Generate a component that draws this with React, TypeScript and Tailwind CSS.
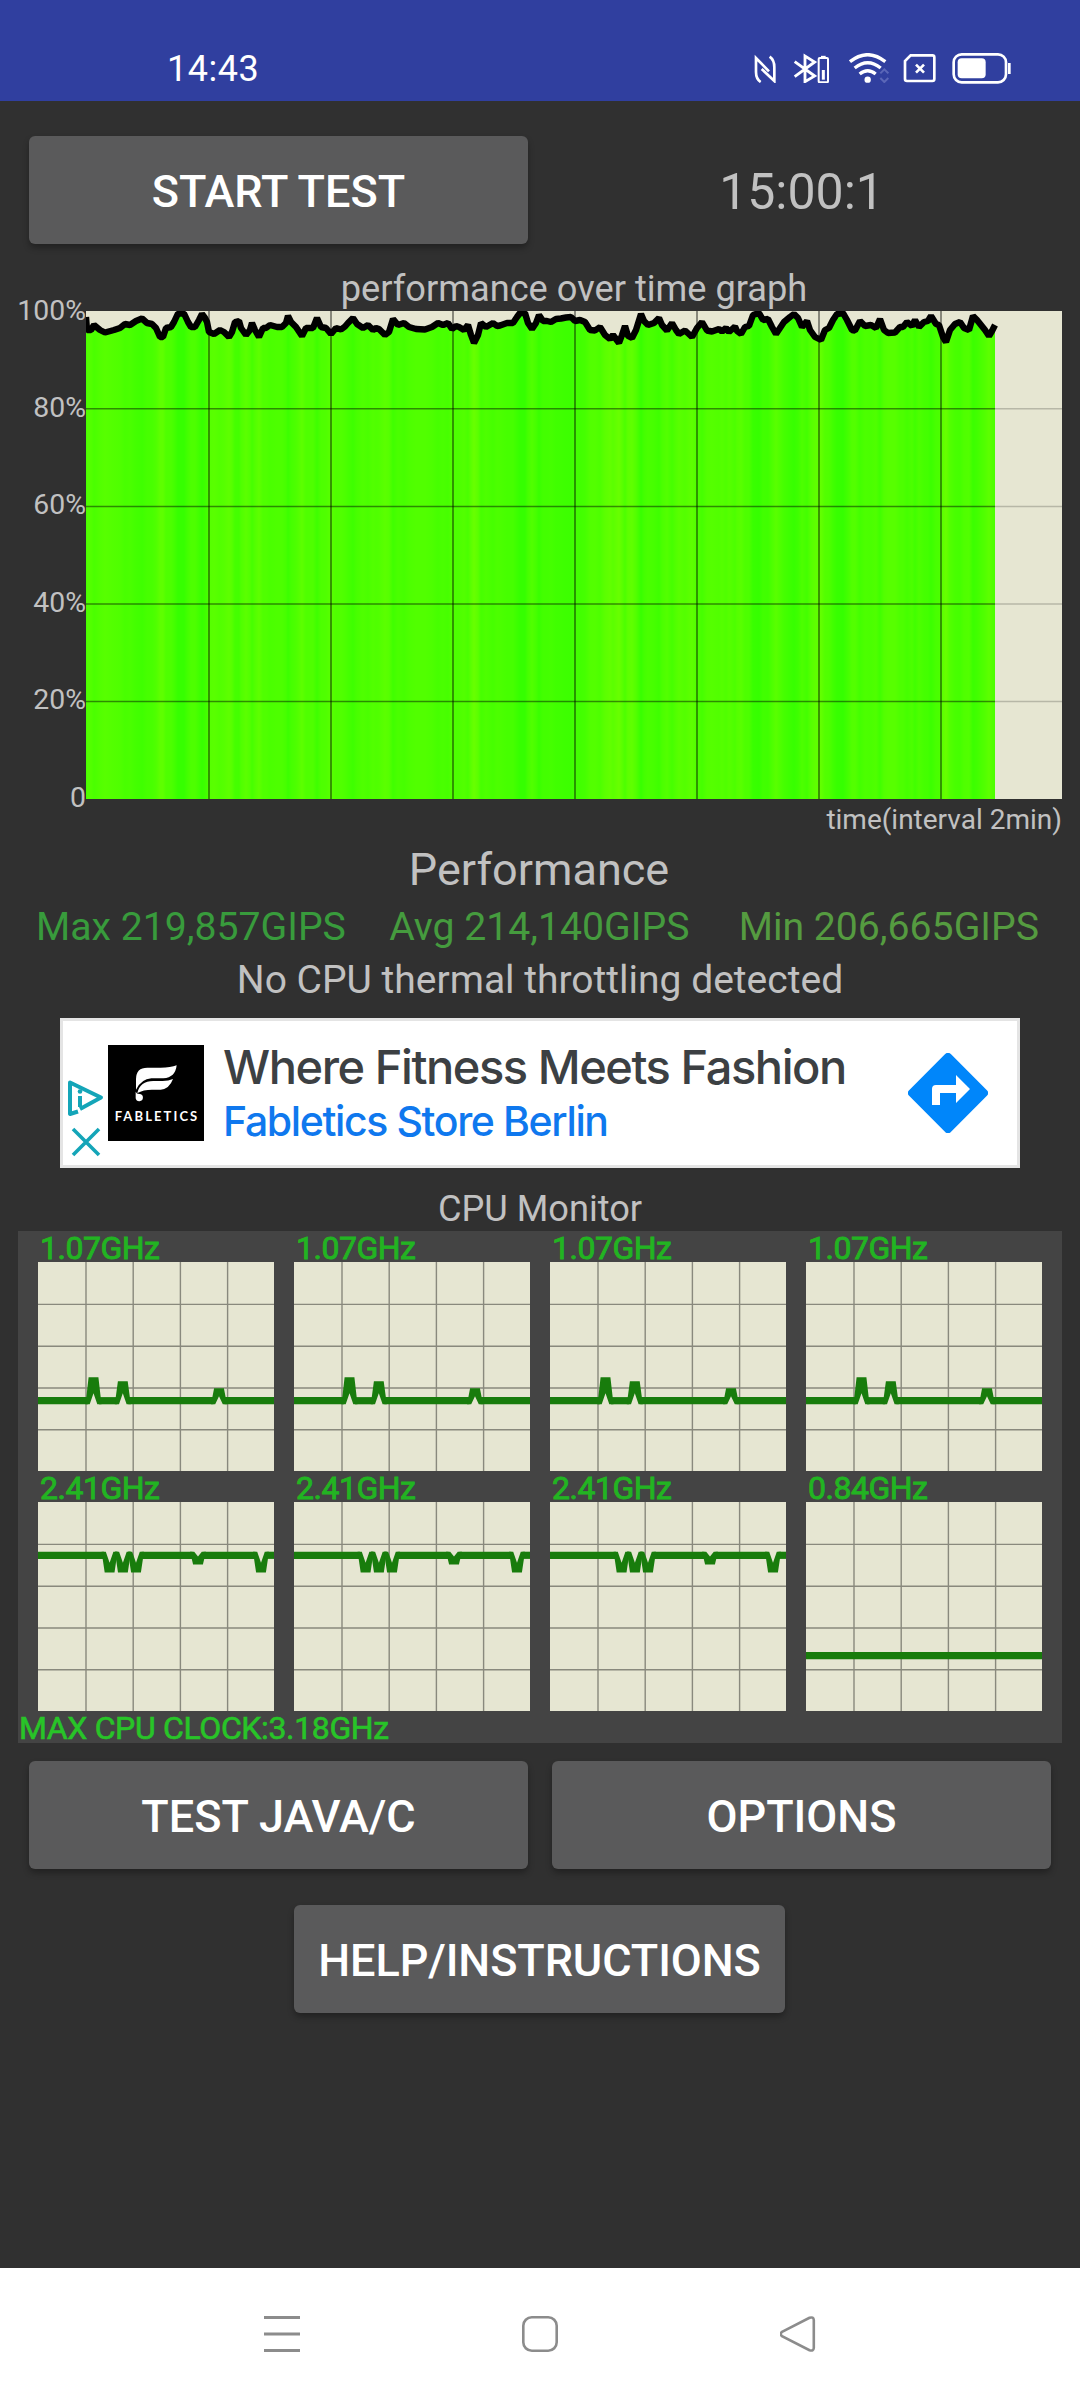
import type { ReactNode } from 'react';

// [x, y] inside the 976x488 plot area
const perfLine: [number, number][] = [
  [0, 6], [1, 19], [5, 19], [8, 14], [14, 19], [19, 21.5], [28, 19], [34, 17], [39, 13], [44, 14], [50, 10], [56, 7.5],
  [61, 12], [66, 13], [70, 17], [74, 26], [77, 26], [80, 17], [85, 16], [88, 11], [92, 2.5], [98, 2.5], [102, 11],
  [105, 16], [109, 16], [113, 9], [116, 3], [119, 7], [121, 11], [123, 21], [128, 23], [134, 19], [138, 21], [143, 26],
  [146, 21], [149, 11], [153, 10], [155, 17], [160, 24], [164, 19], [166, 12], [169, 19], [173, 26], [177, 17], [180, 17],
  [184, 14], [191, 16], [196, 16], [200, 12], [202, 5], [205, 11], [210, 16], [216, 25], [220, 17], [227, 17], [231, 7],
  [235, 16], [240, 17], [245, 23], [250, 17], [255, 18.5], [259, 15.5], [262, 12], [267, 7], [271, 13], [277, 17],
  [282, 14], [287, 19], [290, 17], [293, 18], [299, 24], [303, 21], [307, 8], [312, 14], [318, 12], [323, 16], [330, 18],
  [339, 18.5], [346, 16], [352, 12], [357, 14], [362, 12], [366, 18], [370, 15], [373, 16], [378, 19], [382, 14],
  [385, 24], [388, 32], [392, 24], [395, 12], [400, 16], [407, 12], [411, 15], [414, 14.5], [421, 12], [427, 12],
  [431, 6], [434, 2], [439, 2], [442, 12], [446, 18], [450, 12], [453, 4], [457, 10], [461, 10], [465, 11], [470, 8],
  [475, 7.5], [480, 6.5], [485, 6], [489, 10], [494, 9], [499, 11], [504, 19], [509, 19.5], [514, 16], [519, 24],
  [524, 28], [527, 24], [533, 32], [536, 24], [539, 15], [542, 25], [546, 27], [550, 19], [555, 3], [558, 10], [562, 14],
  [568, 12], [573, 7], [576, 14], [581, 19.5], [586, 12], [590, 19], [593, 23], [599, 19.5], [606, 26], [611, 17],
  [616, 11], [621, 19.5], [626, 20.5], [633, 18], [636, 20.5], [640, 17], [643, 21], [649, 15.5], [651, 20], [655, 23],
  [659, 16], [663, 15], [667, 4], [673, 2], [677, 9], [682, 8], [686, 16], [690, 23], [694, 17], [698, 11], [704, 6],
  [708, 3], [712, 7], [716, 16], [721, 10], [724, 19], [729, 26], [735, 29], [739, 19], [743, 17], [747, 9], [751, 3],
  [757, 2], [761, 9], [766, 19], [769, 19.5], [774, 10], [779, 15], [785, 14], [790, 17], [794, 8], [798, 19], [802, 22],
  [809, 21.5], [814, 16], [817, 16], [821, 11], [826, 15], [829, 9], [833, 16], [838, 11], [842, 10], [845, 5], [850, 13],
  [853, 14], [857, 26], [860, 31], [864, 19], [869, 13], [874, 11], [878, 17], [883, 19], [887, 5], [891, 9], [895, 14],
  [899, 19], [903, 25], [906, 20], [909, 14],
];

const PLOT_W = 976;
const PLOT_H = 488;
const line = perfLine.map(([x, y]) => `${x},${y}`).join(' ');
const heat = (y: number) => `rgb(${Math.round(50 + y * 1.7)},255,0)`;

// base is the steady clock level, each spike is [center x, outer edge y]
interface Trace {
  base: number;
  spikes: [number, number][];
}

const lowCluster: Trace = { base: 138.7, spikes: [[55.5, 115.2], [84.8, 119.2], [181, 126.2]] };
const midCluster: Trace = { base: 53.3, spikes: [[71.6, 70.6], [84.9, 70.6], [98, 70.6], [160, 62.6], [223, 70.6]] };
const primeCore: Trace = { base: 153.7, spikes: [] };

function tracePaths({ base, spikes }: Trace) {
  const paths: string[] = [];
  let x = 0;
  for (const [cx, tip] of spikes) {
    const side = tip < base ? -1 : 1;
    const near = base - side * 3.6;
    const notch = near + side * Math.min(11, Math.abs(tip - near) - 8);
    if (cx - 6.5 > x) paths.push(`M${x} ${base - 3.6}H${cx - 5.5}V${base + 3.6}H${x}Z`);
    paths.push(
      `M${cx - 8} ${near}L${cx - 4.9} ${tip}H${cx + 4.9}L${cx + 8} ${near}H${cx + 3.8}L${cx} ${notch}L${cx - 3.8} ${near}Z`,
    );
    x = cx + 5.5;
  }
  paths.push(`M${x} ${base - 3.6}H236V${base + 3.6}H${x}Z`);
  return paths;
}

const cores = [
  { clock: '1.07GHz', trace: lowCluster },
  { clock: '1.07GHz', trace: lowCluster },
  { clock: '1.07GHz', trace: lowCluster },
  { clock: '1.07GHz', trace: lowCluster },
  { clock: '2.41GHz', trace: midCluster },
  { clock: '2.41GHz', trace: midCluster },
  { clock: '2.41GHz', trace: midCluster },
  { clock: '0.84GHz', trace: primeCore },
];

function StatusBar() {
  return (
    <header className="flex h-[101px] items-start justify-between bg-[#303f9f] pr-[69px] pl-[167px] text-white">
      <span className="pt-[48px] text-[36px] leading-[42px] tracking-[0.5px]">14:43</span>
      <div className="flex items-start pt-[53px]">
        {/* NFC */}
        <svg className="h-[30px] w-[22px]" viewBox="163 69 66 90" fill="none" stroke="currentColor" strokeWidth="8">
          <path d="M183 156Q169 147 169 126V84L208 124" />
          <path d="M210 80Q224 90 224 112V153L186 117" />
        </svg>
        {/* Bluetooth with device battery */}
        <svg className="ml-[17px] h-[30px] w-[36px]" viewBox="280 69 108 90" fill="none" stroke="currentColor">
          <path d="M285 95L345 138L316 155V78L345 96L285 140" strokeWidth="8.5" />
          <rect x="357" y="84" width="28" height="73" rx="3" strokeWidth="6" />
          <path d="M364 80H378" strokeWidth="5" />
          <path d="M371 120V149" strokeWidth="9" />
        </svg>
        {/* Wi-Fi */}
        <svg className="ml-[20px] h-[30px] w-[40px]" viewBox="448 69 120 90" fill="none" stroke="currentColor" strokeWidth="10">
          <path d="M451 95Q504 53 557 95" />
          <path d="M465 114Q504 82 543 114" />
          <path d="M480 132Q504 112 528 132" />
          <circle cx="504" cy="149" r="9.5" fill="currentColor" stroke="none" />
          <path d="M542 130L554 118L566 130M542 144L554 156L566 144" strokeWidth="6" className="text-[#5b67b8]" />
        </svg>
        {/* No SIM */}
        <svg className="ml-[14px] h-[30px] w-[34px]" viewBox="610 69 102 90" fill="none" stroke="currentColor">
          <path d="M633 76H698Q704 76 704 82V147Q704 153 698 153H622Q616 153 616 147V93Z" strokeWidth="8" />
          <path d="M649 104L673 128M673 104L649 128" strokeWidth="8" />
        </svg>
        {/* Battery */}
        <svg className="ml-[15px] h-[31px] w-[59px]" viewBox="757 68 177 93" fill="none" stroke="currentColor">
          <rect x="762" y="72" width="157" height="84" rx="24" strokeWidth="8" />
          <rect x="774" y="84" width="84" height="60" rx="12" fill="currentColor" stroke="none" />
          <path d="M929 98V131" strokeWidth="8" />
        </svg>
      </div>
    </header>
  );
}

function AppButton({ className = '', children }: { className?: string; children: ReactNode }) {
  return (
    <button
      className={`h-[108px] rounded-[6px] bg-[#5a5a5b] pt-[3px] text-[45px] font-medium whitespace-nowrap text-white shadow-[0_4px_6px_rgba(0,0,0,0.3)] ${className}`}
    >
      {children}
    </button>
  );
}

function PerformanceGraph() {
  return (
    <section className="flex px-[18px]">
      <div className="flex h-[487px] w-[68px] flex-col justify-between text-right text-[28.4px]">
        {['100%', '80%', '60%', '40%', '20%', '0'].map((label) => (
          <div key={label} className="flex h-0 items-center justify-end whitespace-nowrap">
            {label}
          </div>
        ))}
      </div>
      <svg width={PLOT_W} height={PLOT_H} viewBox={`0 0 ${PLOT_W} ${PLOT_H}`} className="bg-[#e6e6d2]">
        <defs>
          <linearGradient id="heat" gradientUnits="userSpaceOnUse" x1="0" y1="0" x2="909" y2="0">
            {perfLine.map(([x, y], i) => (
              <stop key={i} offset={x / 909} stopColor={heat(y)} />
            ))}
          </linearGradient>
        </defs>
        <polygon points={`0,${PLOT_H} ${line} 909,${PLOT_H}`} fill="url(#heat)" />
        <g stroke="#000">
          {[1, 2, 3, 4, 5, 6, 7].map((n) => (
            <path key={n} d={`M${n * 122 + 1} 0V${PLOT_H}`} strokeWidth="1.5" opacity="0.55" />
          ))}
          {[1, 2, 3, 4].map((n) => (
            <g key={n} strokeWidth="1.5">
              <path d={`M0 ${n * 97.6 + 0.2}H909`} opacity="0.45" />
              <path d={`M909 ${n * 97.6 + 0.2}H976`} opacity="0.2" />
            </g>
          ))}
        </g>
        <polyline points={line} fill="none" stroke="#000" strokeWidth="6.4" strokeLinejoin="bevel" />
      </svg>
    </section>
  );
}

function AdBanner() {
  return (
    <section className="mx-auto mt-[14px] flex h-[150px] w-[960px] border-[3px] border-[#e4e4e4] bg-white">
      <div className="flex w-[45px] flex-col items-start pt-[58px] pl-[3px]">
        <svg width="38" height="38" viewBox="0 0 38 38" fill="none" stroke="#14a5b8" strokeWidth="4">
          <path d="M12 32.5L4 35V3.5L35 18.5L14 30" strokeLinejoin="round" />
          <path d="M14 17V28" strokeWidth="4" />
          <circle cx="14" cy="12.5" r="2.3" fill="#14a5b8" stroke="none" />
        </svg>
        <svg className="mt-[10px] ml-[4px]" width="32" height="32" viewBox="0 0 32 32" stroke="#14a5b8" strokeWidth="3.6">
          <path d="M3 2L29 28M29 2L3 28" />
        </svg>
      </div>
      <div className="mt-[24px] flex h-[96px] w-[96px] flex-col items-center bg-black text-white">
        <svg className="mt-[20px]" width="44" height="38" viewBox="0 0 132 114" fill="currentColor">
          <path d="M6 74V42Q6 8 40 8H80Q110 8 128 1Q124 38 88 40H52Q22 42 6 74Z" />
          <path d="M10 84Q18 48 58 48H86Q104 48 117 42Q106 72 80 74H54Q28 74 10 84Z" />
          <path d="M5 100V80Q8 88 18 87A11 11 0 1 1 5 100Z" />
        </svg>
        <span className="mt-[6px] pl-[2px] font-[Lato,sans-serif] text-[13px] leading-[14px] font-bold tracking-[2.1px]">FABLETICS</span>
      </div>
      <div className="ml-[19px] flex-1 font-[Inter,sans-serif] font-medium whitespace-nowrap">
        <div className="pt-[17px] text-[47px] leading-[58px] tracking-[-1.45px] text-[#3c4043]">Where Fitness Meets Fashion</div>
        <div className="text-[41px] leading-[50px] tracking-[-1.38px] text-[#0f78ee]">Fabletics Store Berlin</div>
      </div>
      <svg className="mt-[32px] mr-[29px]" width="80" height="80" viewBox="0 0 80 80">
        <rect x="10.5" y="10.5" width="59" height="59" rx="4" transform="rotate(45 40 40)" fill="#0086fa" />
        <path d="M24 52V36Q24 32 28 32H48V22L62 36L48 50V40H32V52Z" fill="#fff" />
      </svg>
    </section>
  );
}

function CoreChart({ clock, trace }: { clock: string; trace: Trace }) {
  return (
    <div>
      <div className="h-[31px] pl-[2px] text-[32px] leading-[34px] tracking-[-0.5px] text-[#22b422] [-webkit-text-stroke:0.9px_#22b422]">
        {clock}
      </div>
      <svg className="block bg-[#e6e6d2]" width="236" height="209" viewBox="0 0 236 209">
        <g stroke="#000" opacity="0.4" strokeWidth="1.4">
          {[1, 2, 3, 4].map((n) => (
            <path key={n} d={`M${n * 47.2 + 0.8} 0V209M0 ${n * 41.8 + 0.6}H236`} />
          ))}
        </g>
        <g fill="#187c0c">
          {tracePaths(trace).map((d, i) => (
            <path key={i} d={d} />
          ))}
        </g>
      </svg>
    </div>
  );
}

function NavBar() {
  return (
    <nav className="mt-auto flex h-[132px] items-center justify-between bg-white px-[264px] text-[#8c8c8c]">
      <svg width="36" height="36" viewBox="0 0 36 36" stroke="currentColor" strokeWidth="3">
        <path d="M0 1.5H36M0 18H36M0 34.5H36" />
      </svg>
      <svg width="36" height="36" viewBox="0 0 36 36" fill="none" stroke="currentColor" strokeWidth="2.6">
        <rect x="1.3" y="1.3" width="33.4" height="33.4" rx="8.5" />
      </svg>
      <svg width="36" height="36" viewBox="0 0 36 36" fill="none" stroke="currentColor" strokeWidth="2.6">
        <path d="M2 15.8L29.5 1.8Q33.5 0.5 33.8 4V32Q33.5 35.5 29.5 34.2L2 20.2Q-0.5 18 2 15.8Z" />
      </svg>
    </nav>
  );
}

export default function App() {
  return (
    <div className="flex h-[2400px] w-[1080px] flex-col overflow-hidden bg-[#303030] font-[Roboto,sans-serif] text-[#c1c1c1]">
      <StatusBar />

      <div className="flex items-center gap-[24px] px-[29px] pt-[35px]">
        <AppButton className="w-[499px]">START TEST</AppButton>
        <div className="flex-1 pt-[3px] text-center text-[50px] leading-[60px]">15:00:1</div>
      </div>

      <h2 className="pt-[23px] pr-[18px] pl-[86px] text-center text-[36.2px] leading-[44px]">performance over time graph</h2>
      <PerformanceGraph />
      <div className="pt-[1px] pr-[18px] text-right text-[28px] leading-[39px]">time(interval 2min)</div>

      <h1 className="pr-[2px] text-center text-[45px] leading-[62px]">Performance</h1>
      <div className="flex justify-between pr-[41px] pl-[36px] text-[39.2px] leading-[53px] whitespace-nowrap">
        <span className="text-[#389b3c]">Max 219,857GIPS</span>
        <span className="mr-[6px] text-[#459b3e]">Avg 214,140GIPS</span>
        <span className="text-[#559b40]">Min 206,665GIPS</span>
      </div>
      <div className="h-[50px] text-center text-[39px] leading-[52px]">No CPU thermal throttling detected</div>

      <AdBanner />

      <h2 className="mt-[19px] text-center text-[36.2px] leading-[44px]">CPU Monitor</h2>
      <section className="mx-[18px] h-[512px] bg-[#444]">
        <div className="grid grid-cols-[repeat(4,236px)] gap-x-[20px] px-[20px]">
          {cores.map((core, i) => (
            <CoreChart key={i} {...core} />
          ))}
        </div>
        <div className="pl-[1px] text-[32px] leading-[34px] tracking-[-0.36px] text-[#28c428] [-webkit-text-stroke:0.6px_#28c428]">
          MAX CPU CLOCK:3.18GHz
        </div>
      </section>

      <div className="mt-[18px] grid grid-cols-[499px_499px] gap-[24px] px-[29px]">
        <AppButton>TEST JAVA/C</AppButton>
        <AppButton>OPTIONS</AppButton>
      </div>
      <AppButton className="mt-[36px] mr-[1px] w-[491px] self-center tracking-[-0.1px]">HELP/INSTRUCTIONS</AppButton>

      <NavBar />
    </div>
  );
}
